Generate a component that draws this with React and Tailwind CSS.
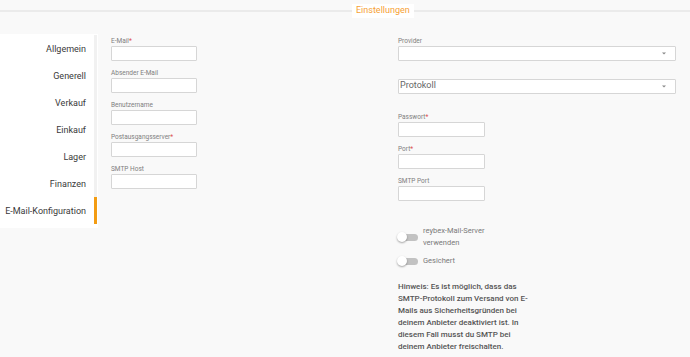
import React from "react";

function Label({ text, req }) {
  return (
    <div className="h-[8px] leading-[8px] text-[6.5px] text-[#808080] whitespace-nowrap">
      {text}
      {req && <span className="text-[#e05050]">*</span>}
    </div>
  );
}

function Input({ w = "w-[86px]" }) {
  return <div className={`${w} h-[15px] mt-[1px] bg-white border border-[#d6d6d6] rounded-[1px]`} />;
}

function Field({ label, req, w, className = "" }) {
  return (
    <div className={className}>
      <Label text={label} req={req} />
      <Input w={w} />
    </div>
  );
}

function Caret() {
  return (
    <svg width="4" height="3" viewBox="0 0 4 3" className="mr-[9px]">
      <path d="M0 0.5 L4 0.5 L2 2.5 Z" fill="#888" />
    </svg>
  );
}

function Select({ placeholder, className = "" }) {
  return (
    <div
      className={`w-[278px] h-[15px] bg-white border border-[#d6d6d6] rounded-[1px] flex items-center justify-between ${className}`}
    >
      <span className="text-[9px] leading-[9px] text-[#666] pl-[1px] -mt-[3px]">{placeholder}</span>
      <Caret />
    </div>
  );
}

function Toggle() {
  return (
    <div className="relative w-[21px] h-[10px] shrink-0">
      <div className="absolute left-[3px] right-0 top-[1.5px] h-[7px] rounded-full bg-[#c2c2c2]" />
      <div className="absolute left-0 top-0 w-[10px] h-[10px] rounded-full bg-white shadow-[0_1px_2px_rgba(0,0,0,0.35)]" />
    </div>
  );
}

const items = [
  "Allgemein",
  "Generell",
  "Verkauf",
  "Einkauf",
  "Lager",
  "Finanzen",
  "E-Mail-Konfiguration",
];

export default function App() {
  return (
    <div
      className="w-[690px] h-[357px] bg-[#f9f9f9] overflow-hidden"
      style={{ fontFamily: "Roboto, 'Liberation Sans', sans-serif" }}
    >
      {/* Header */}
      <div className="h-[22px] flex items-center">
        <div className="w-[352px] h-[2px] bg-[#ebebeb]" />
        <div className="bg-white px-[4px] h-[14px] flex items-center text-[9px] text-[#f6a134]">
          Einstellungen
        </div>
        <div className="flex-1 h-[2px] bg-[#ebebeb]" />
      </div>

      <div className="flex">
        {/* Sidebar */}
        <div className="w-[98px] mt-[12px] bg-white pt-[1px] pb-[4px] pr-[1px] self-start">
          {items.map((it, i) => (
            <div
              key={it}
              className={`h-[27px] flex items-center justify-end pr-[8px] pt-[3px] border-r-[3px] text-[9px] text-[#3a3a3a] whitespace-nowrap ${
                i === items.length - 1 ? "border-[#f39c12]" : "border-[#f1f1f1]"
              }`}
            >
              {it}
            </div>
          ))}
        </div>

        {/* Content */}
        <div className="pl-[13px] pt-[15px] grid grid-cols-[287px_278px]">
          <div className="flex flex-col gap-[8px]">
            <Field label="E-Mail" req />
            <Field label="Absender E-Mail" />
            <Field label="Benutzername" />
            <Field label="Postausgangsserver" req />
            <Field label="SMTP Host" />
          </div>

          <div className="flex flex-col">
            <Label text="Provider" />
            <Select className="mt-[1px]" />
            <Select className="mt-[18px]" placeholder="Protokoll" />
            <Field className="mt-[19px]" label="Passwort" req w="w-[87px]" />
            <Field className="mt-[8px]" label="Port" req w="w-[87px]" />
            <Field className="mt-[8px]" label="SMTP Port" w="w-[87px]" />

            <div className="mt-[24px] flex items-center gap-[5px] -ml-[1px]">
              <Toggle />
              <div className="text-[7.5px] leading-[12px] text-[#7a7a7a]">
                reybex-Mail-Server
                <br />
                verwenden
              </div>
            </div>
            <div className="mt-[6px] flex items-center gap-[5px] -ml-[1px]">
              <Toggle />
              <div className="text-[7.5px] leading-[12px] text-[#7a7a7a]">Gesichert</div>
            </div>

            <div className="mt-[14px] text-[8px] leading-[12px] font-medium text-[#555] whitespace-nowrap">
              <div>Hinweis: Es ist möglich, dass das</div>
              <div>SMTP-Protokoll zum Versand von E-</div>
              <div>Mails aus Sicherheitsgründen bei</div>
              <div>deinem Anbieter deaktiviert ist. In</div>
              <div>diesem Fall musst du SMTP bei</div>
              <div>deinem Anbieter freischalten.</div>
            </div>
          </div>
        </div>
      </div>
    </div>
  );
}
